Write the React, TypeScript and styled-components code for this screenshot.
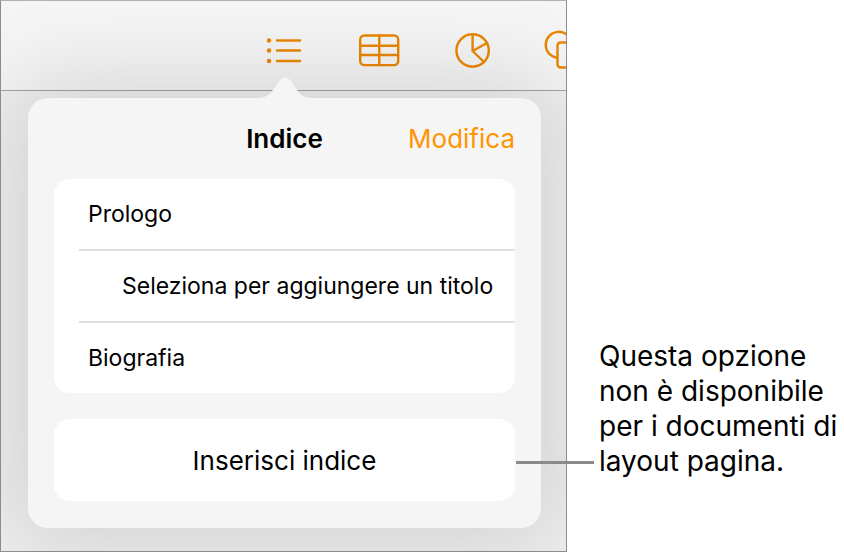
import React from 'react';
import styled, { createGlobalStyle } from 'styled-components';

const GlobalStyle = createGlobalStyle`
  *, *::before, *::after { box-sizing: border-box; }
  body {
    margin: 0;
    background: #fff;
    color: #000;
    font-family: Inter, "Liberation Sans", sans-serif;
  }
  button {
    border: 0;
    padding: 0;
    background: none;
    color: inherit;
    font: inherit;
    cursor: pointer;
  }
`;

const Page = styled.main`
  display: grid;
  grid-template-columns: 567fr 277fr;
`;

const Screen = styled.section`
  overflow: hidden;
  border: 1px solid #8c8c8c;
  border-top-color: #b0b0b0;
  background: #f0f0f0;
`;

const Toolbar = styled.div`
  display: flex;
  align-items: center;
  gap: 54px;
  height: 90px;
  padding: 8px 0 0 265px;
  border-bottom: 1px solid #a3a3a3;
  background: #f5f5f5;
  overflow: hidden;
`;

const ToolButton = styled.button<{ $width: number }>`
  flex: none;
  width: ${({ $width }) => $width}px;
  height: 40px;
  color: #ea8600;

  svg {
    display: block;
    fill: none;
    stroke: currentColor;
    stroke-width: 2.4;
    stroke-linecap: round;
    stroke-linejoin: round;
  }
`;

const Popover = styled.div`
  position: relative;
  margin: 7px 25px 23px 27px;
  padding: 0 26px 27px;
  border-radius: 20px;
  background: #f5f5f5;
  box-shadow: 0 0 90px 20px rgba(0, 0, 0, 0.13);
`;

const Pointer = styled.svg`
  position: absolute;
  left: 230px;
  bottom: 100%;
  display: block;
  fill: #f5f5f5;
`;

const Header = styled.header`
  display: grid;
  grid-template-columns: 1fr auto 1fr;
  align-items: center;
  height: 81px;
`;

const Title = styled.h1`
  grid-column: 2;
  margin: 0;
  font-size: 26px;
  font-weight: 600;
`;

const EditButton = styled.button`
  justify-self: end;
  color: #ff9500;
  font-size: 26px;
`;

const Entries = styled.ul`
  margin: 0 0 26px;
  padding: 0 0 0 25px;
  border-radius: 16px;
  background: #fff;
  list-style: none;
`;

const Entry = styled.li`
  height: 72px;
  border-bottom: 2px solid #e0e0e0;

  &:last-child {
    height: 70px;
    border-bottom: 0;
  }
`;

const EntryButton = styled.button<{ $nested?: boolean }>`
  width: 100%;
  height: 100%;
  padding-left: ${({ $nested }) => ($nested ? 43 : 9)}px;
  font-size: 23px;
  text-align: left;
  white-space: nowrap;
`;

const InsertButton = styled.button`
  display: block;
  width: 100%;
  height: 82px;
  border-radius: 16px;
  background: #fff;
  font-size: 26px;
`;

const Note = styled.aside`
  position: relative;
  align-self: end;
  padding: 0 0 73px 32px;
`;

const NoteText = styled.p`
  margin: 0;
  font-size: 28px;
  line-height: 35px;
`;

const Leader = styled.span`
  position: absolute;
  left: -51px;
  bottom: 88px;
  width: 78px;
  height: 3px;
  background: #8a8a8a;
`;

const entries = [
  { label: 'Prologo' },
  { label: 'Seleziona per aggiungere un titolo', nested: true },
  { label: 'Biografia' },
];

export default function App() {
  return (
    <>
      <GlobalStyle />
      <Page>
        <Screen>
          <Toolbar>
            <ToolButton $width={38} aria-label="Indice">
              <svg width="38" height="40" viewBox="0 0 38 40">
                <path d="M11 10.500H34M11 20.500H34M11 31H34" />
                <g fill="currentColor" stroke="none">
                  <circle cx="3" cy="10.500" r="2.200" />
                  <circle cx="3" cy="20.500" r="2.200" />
                  <circle cx="3" cy="31" r="2.200" />
                </g>
              </svg>
            </ToolButton>
            <ToolButton $width={42} aria-label="Tabella">
              <svg width="42" height="40" viewBox="0 0 42 40">
                <rect x="2.200" y="5.500" width="38" height="29.600" rx="4" />
                <path d="M2.200 15.700H40M2.200 25H40M21.300 5.500V35" />
              </svg>
            </ToolButton>
            <ToolButton $width={36} aria-label="Grafico">
              <svg width="36" height="40" viewBox="0 0 36 40">
                <circle cx="18.600" cy="20.500" r="16.200" />
                <path d="M18.600 4.300V21L33 13M18.600 21L30 32" />
              </svg>
            </ToolButton>
            <ToolButton $width={42} aria-label="Forma">
              <svg width="42" height="40" viewBox="0 0 42 40">
                <path d="M13 27.700A13 13 0 1 1 27.500 12.500" />
                <rect x="13.500" y="12.500" width="26" height="25" rx="3" />
              </svg>
            </ToolButton>
          </Toolbar>
          <Popover role="dialog" aria-labelledby="toc-title">
            <Pointer width="54" height="22" viewBox="0 0 54 22" aria-hidden="true">
              <path d="M0 22C9 22 13 17 16 12.500L21.500 4.500Q27 -2.500 32.500 4.500L38 12.500C41 17 45 22 54 22Z" />
            </Pointer>
            <Header>
              <Title id="toc-title">Indice</Title>
              <EditButton>Modifica</EditButton>
            </Header>
            <Entries>
              {entries.map(({ label, nested }) => (
                <Entry key={label}>
                  <EntryButton $nested={nested}>{label}</EntryButton>
                </Entry>
              ))}
            </Entries>
            <InsertButton>Inserisci indice</InsertButton>
          </Popover>
        </Screen>
        <Note>
          <Leader />
          <NoteText>Questa opzione non è disponibile per i documenti di layout pagina.</NoteText>
        </Note>
      </Page>
    </>
  );
}
